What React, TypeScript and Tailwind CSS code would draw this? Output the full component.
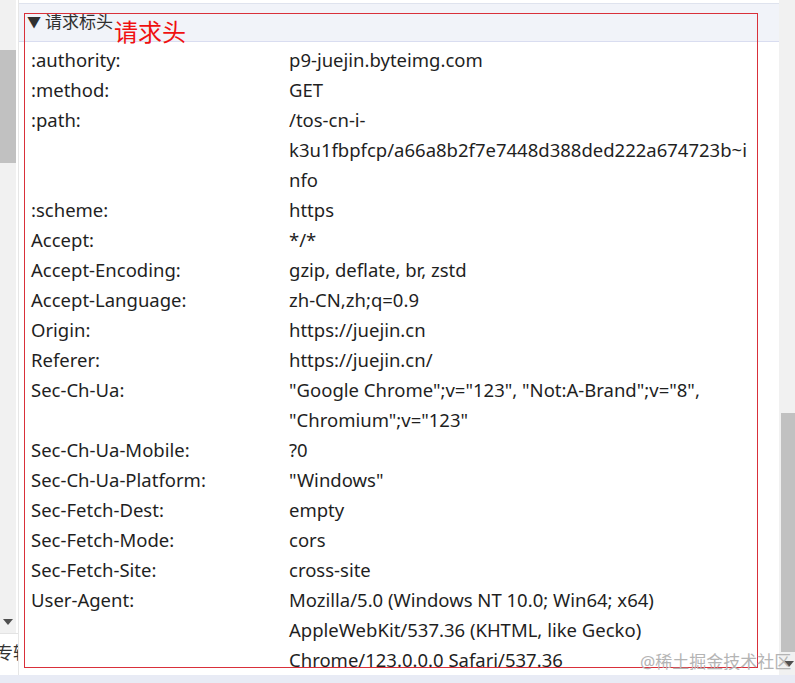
import React from 'react';

type Row = { name: string; value: string[] };

const rows: Row[] = [
  { name: ':authority:', value: ['p9-juejin.byteimg.com'] },
  { name: ':method:', value: ['GET'] },
  {
    name: ':path:',
    value: [
      '/tos-cn-i-',
      'k3u1fbpfcp/a66a8b2f7e7448d388ded222a674723b~i',
      'nfo',
    ],
  },
  { name: ':scheme:', value: ['https'] },
  { name: 'Accept:', value: ['*/*'] },
  { name: 'Accept-Encoding:', value: ['gzip, deflate, br, zstd'] },
  { name: 'Accept-Language:', value: ['zh-CN,zh;q=0.9'] },
  { name: 'Origin:', value: ['https://juejin.cn'] },
  { name: 'Referer:', value: ['https://juejin.cn/'] },
  {
    name: 'Sec-Ch-Ua:',
    value: ['"Google Chrome";v="123", "Not:A-Brand";v="8",', '"Chromium";v="123"'],
  },
  { name: 'Sec-Ch-Ua-Mobile:', value: ['?0'] },
  { name: 'Sec-Ch-Ua-Platform:', value: ['"Windows"'] },
  { name: 'Sec-Fetch-Dest:', value: ['empty'] },
  { name: 'Sec-Fetch-Mode:', value: ['cors'] },
  { name: 'Sec-Fetch-Site:', value: ['cross-site'] },
  {
    name: 'User-Agent:',
    value: [
      'Mozilla/5.0 (Windows NT 10.0; Win64; x64)',
      'AppleWebKit/537.36 (KHTML, like Gecko)',
      'Chrome/123.0.0.0 Safari/537.36',
    ],
  },
];

function HeaderRow({ row }: { row: Row }) {
  return (
    <div className="flex">
      <div className="w-[258px] shrink-0 whitespace-nowrap">{row.name}</div>
      <div className="flex flex-col whitespace-nowrap">
        {row.value.map((line, i) => (
          <span key={i}>{line}</span>
        ))}
      </div>
    </div>
  );
}

export default function App() {
  return (
    <div
      className="relative flex h-[683px] w-[795px] flex-col overflow-hidden bg-white text-[#1f1f1f]"
      style={{ fontFamily: '"Noto Sans", "Noto Sans CJK SC", sans-serif' }}
    >
      <div className="flex min-h-0 flex-1">
        {/* left pane edge */}
        <div className="flex w-[19px] shrink-0 flex-col border-r border-[#e6e6e6]">
          <div className="flex h-[633px] w-[16px] flex-col bg-[#f1f1f1]">
            <div className="h-[50px]" />
            <div className="h-[113px] bg-[#c1c1c1]" />
            <div className="flex-1" />
            <div className="flex h-[22px] items-center justify-center">
              <div className="h-0 w-0 border-x-[5px] border-t-[6px] border-x-transparent border-t-[#505050]" />
            </div>
          </div>
          <div className="h-px w-full bg-[#e3e3e3]" />
          <div className="overflow-hidden pt-[9px]">
            <div className="ml-[-4px] whitespace-nowrap text-[17px] leading-[20px] text-[#333]">
              专辑
            </div>
          </div>
        </div>

        {/* main panel */}
        <div className="flex min-w-0 flex-1 flex-col">
          <div className="h-[4px] border-b border-[#dfe3ee]" />
          <div className="flex h-[38px] items-start border-b border-[#d9ddf0] bg-[#f1f3f9] pl-[8px] pt-[7px] text-[17px] leading-[22px] text-[#303030]">
            <span className="mr-[4px] text-[14px]">▼</span>
            <span>请求标头</span>
          </div>
          <div className="flex flex-col pl-[12px] pt-[3px] text-[18.5px] leading-[30px]">
            {rows.map((r) => (
              <HeaderRow key={r.name} row={r} />
            ))}
          </div>
        </div>

        {/* right scrollbar */}
        <div className="flex w-[16px] shrink-0 flex-col bg-[#f1f1f1]">
          <div className="h-[413px]" />
          <div className="ml-[2px] h-[239px] bg-[#c1c1c1]" />
          <div className="flex flex-1 items-start justify-end pt-[9px] pr-[1px]">
            <div className="h-0 w-0 border-x-[5px] border-t-[6px] border-x-transparent border-t-[#505050]" />
          </div>
        </div>
      </div>
      <div className="h-[8px] shrink-0 bg-[#e8ebf5]" />

      {/* annotation overlay */}
      <div className="pointer-events-none absolute left-[24px] top-[13px] h-[655px] w-[734px] border border-[#d9303a]" />
      <div className="absolute left-[114px] top-[18px] text-[24px] leading-[28px] text-[#f01010]">
        请求头
      </div>
      <div className="absolute left-[640px] top-[651px] whitespace-nowrap text-[17px] leading-[22px] text-[#b4b4b4]">
        @稀土掘金技术社区
      </div>
    </div>
  );
}
